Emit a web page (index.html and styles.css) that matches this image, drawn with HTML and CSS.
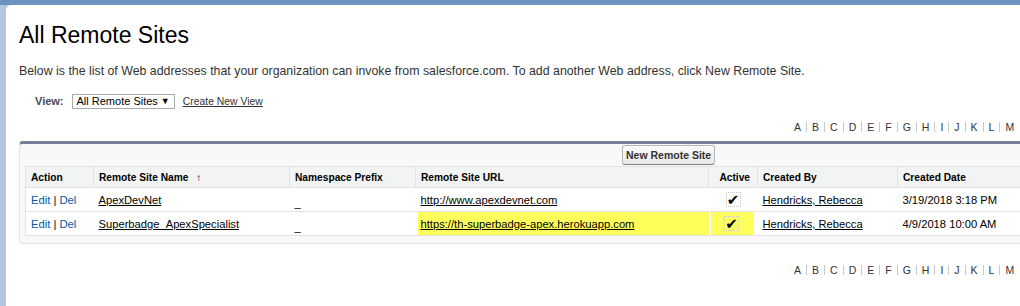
FILE: index.html
```html
<!DOCTYPE html>
<html lang="en">
<head>
  <meta charset="UTF-8">
  <title>All Remote Sites</title>
  <link rel="stylesheet" href="styles.css">
</head>
<body>
  <div class="page">
    <div class="panel">
      <h1 class="page-title">All Remote Sites</h1>
      <p class="intro">Below is the list of Web addresses that your organization can invoke from salesforce.com. To add another Web address, click New Remote Site.</p>

      <div class="view-row">
        <label for="fcf">View:</label>
        <span class="view-select" id="fcf">All Remote Sites <span class="caret">&#9660;</span></span>
        <a href="#" class="create-view">Create New View</a>
      </div>

      <div class="alpha">
        <a href="#">A</a><a href="#">B</a><a href="#">C</a><a href="#">D</a><a href="#">E</a><a href="#">F</a><a href="#">G</a><a href="#">H</a><a href="#">I</a><a href="#">J</a><a href="#">K</a><a href="#">L</a><a href="#">M</a>
      </div>

      <div class="list-block">
        <div class="block-buttons">
          <button type="button">New Remote Site</button>
        </div>
        <table class="list">
          <thead>
            <tr>
              <th class="col-action">Action</th>
              <th class="col-name">Remote Site Name <span class="sort">&#8593;</span></th>
              <th class="col-ns">Namespace Prefix</th>
              <th class="col-url">Remote Site URL</th>
              <th class="col-active">Active</th>
              <th class="col-by">Created By</th>
              <th class="col-date">Created Date</th>
            </tr>
          </thead>
          <tbody>
            <tr>
              <td class="actions"><a href="#">Edit</a> | <a href="#">Del</a></td>
              <td><a href="#" class="rec">ApexDevNet</a></td>
              <td><span class="ns">_</span></td>
              <td><a href="#" class="rec">http://www.apexdevnet.com</a></td>
              <td class="col-active"><span class="check">&#10004;</span></td>
              <td><a href="#" class="rec">Hendricks, Rebecca</a></td>
              <td>3/19/2018 3:18 PM</td>
            </tr>
            <tr>
              <td class="actions"><a href="#">Edit</a> | <a href="#">Del</a></td>
              <td><a href="#" class="rec">Superbadge_ApexSpecialist</a></td>
              <td><span class="ns">_</span></td>
              <td class="marked url-mark"><a href="#" class="rec">https://th-superbadge-apex.herokuapp.com</a></td>
              <td class="col-active marked active-mark"><span class="check">&#10004;</span></td>
              <td><a href="#" class="rec">Hendricks, Rebecca</a></td>
              <td>4/9/2018 10:00 AM</td>
            </tr>
          </tbody>
        </table>
      </div>

      <div class="alpha alpha-bottom">
        <a href="#">A</a><a href="#">B</a><a href="#">C</a><a href="#">D</a><a href="#">E</a><a href="#">F</a><a href="#">G</a><a href="#">H</a><a href="#">I</a><a href="#">J</a><a href="#">K</a><a href="#">L</a><a href="#">M</a>
      </div>
    </div>
  </div>
</body>
</html>
```

FILE: styles.css
```css
* {
  box-sizing: border-box;
}
body {
  margin: 0;
  overflow: hidden;
  font-family: 'Liberation Sans', Arial, sans-serif;
  color: #333;
  background: #b3c7e3;
}
.page {
  width: 1340px;
  min-height: 306px;
  border-top: 5px solid #6b93c1;
  padding-left: 6px;
  background: #b3c7e3;
}
.panel {
  min-height: 301px;
  background: #fff;
  border-top-left-radius: 5px;
  padding: 16px 0 0 13px;
}
.page-title {
  margin: 0;
  font-size: 23px;
  font-weight: normal;
  line-height: 28px;
  color: #000;
}
.intro {
  margin: 15px 0 0 0;
  font-size: 12.35px;
  line-height: 15px;
  color: #333;
}
.view-row {
  display: flex;
  align-items: center;
  margin-top: 14px;
  padding-left: 16px;
  height: 16px;
}
.view-row label {
  font-size: 11px;
  font-weight: bold;
  color: #4a4a56;
  margin-right: 8px;
}
.view-select {
  display: inline-flex;
  align-items: center;
  height: 15px;
  padding: 0 4px 0 4px;
  border: 1px solid #a9a9a9;
  font-size: 11px;
  color: #000;
  background: #fff;
}
.view-select .caret {
  font-size: 9px;
  margin-left: 3px;
}
.create-view {
  margin-left: 8px;
  font-size: 10.4px;
  color: #333;
  text-decoration: underline;
}
.alpha {
  display: flex;
  padding-left: 770px;
  margin-top: 12px;
  height: 12px;
  align-items: center;
  white-space: nowrap;
}
.alpha a {
  font-size: 10.5px;
  line-height: 10px;
  color: #333;
  text-decoration: none;
  padding: 0 5px;
  border-left: 1px solid #c9c9c9;
}
.alpha a:first-child {
  border-left: none;
}
.list-block {
  margin-top: 8px;
  background: #f8f8f8;
  border-top: 3px solid #747f98;
  border-left: 1px solid #e3e3e3;
  border-bottom: 1px solid #e0e0e0;
  border-radius: 4px 0 0 4px;
  padding: 0 0 7px 5px;
}
.block-buttons {
  height: 22px;
  padding: 1px 0 0 597px;
}
.block-buttons button {
  height: 20px;
  padding: 0 3px;
  font-family: 'Liberation Sans', Arial, sans-serif;
  font-size: 10.5px;
  font-weight: bold;
  color: #333;
  background: linear-gradient(#fbfbfb, #e8e8e8);
  border: 1px solid #b5b5b5;
  border-bottom-color: #7f7f7f;
  border-radius: 3px;
}
.list {
  width: 100%;
  border-collapse: collapse;
  background: #fff;
  border: 1px solid #e0e3e5;
}
.list th {
  text-align: left;
  font-size: 10.2px;
  font-weight: bold;
  color: #000;
  background: #f2f3f3;
  height: 21px;
  padding: 0 5px;
  border: 1px solid #e0e3e5;
  white-space: nowrap;
}
.list td {
  font-size: 11.2px;
  color: #000;
  height: 24px;
  padding: 0 5px;
  border-bottom: 1px solid #e3e3e3;
  white-space: nowrap;
  vertical-align: middle;
}
.col-action { width: 68px; }
.col-name { width: 196px; }
.col-ns { width: 126px; }
.col-url { width: 293px; }
.col-active { width: 49px; }
.col-by { width: 140px; }
.list th.col-active {
  text-align: right;
  padding-right: 7px;
}
.list td.col-active {
  text-align: center;
}
.sort {
  font-size: 10px;
  margin-left: 5px;
}
.actions a {
  color: #015ba7;
  text-decoration: none;
}
.actions {
  color: #015ba7;
}
.rec {
  color: #000;
  text-decoration: underline;
}
.ns {
  color: #000;
  position: relative;
  top: 3px;
}
.check {
  display: inline-block;
  width: 15px;
  height: 15px;
  line-height: 15px;
  font-family: 'DejaVu Sans', sans-serif;
  font-size: 15px;
  color: #000;
  border: 1px dotted #c8c8c8;
  text-align: center;
}
.marked {
  background: #ffff5c;
}
.list td.url-mark {
  box-shadow: inset 2px 0 0 #fff;
}
.list td.active-mark {
  box-shadow: inset 2px 0 0 #fff, inset -5px 0 0 #fff;
  padding: 0 3px 0 0;
}
.alpha-bottom {
  margin-top: 20px;
}
```
